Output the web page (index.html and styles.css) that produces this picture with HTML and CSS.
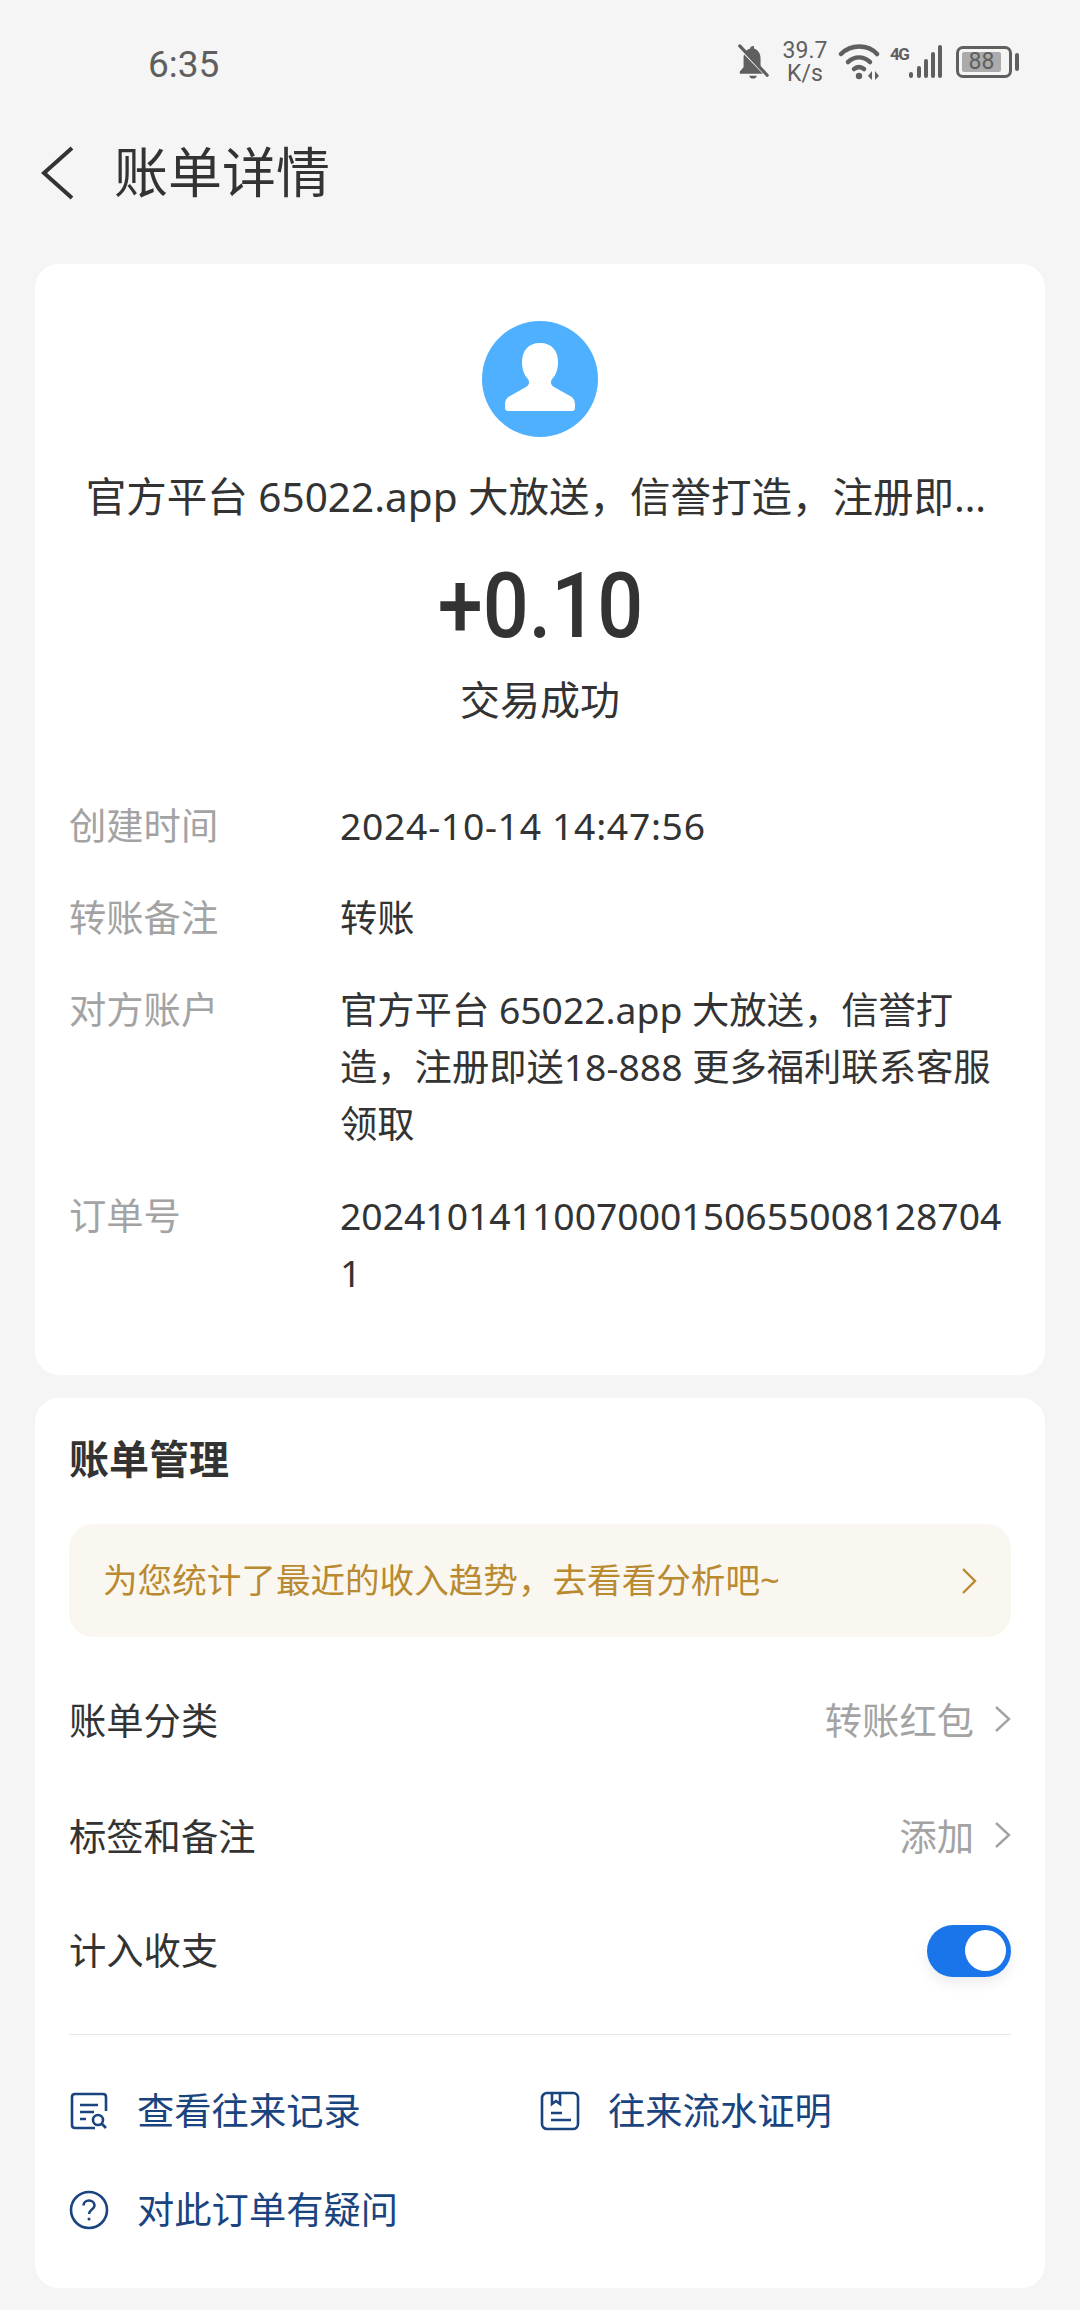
FILE: index.html
```html
<!DOCTYPE html>
<html lang="zh-CN">
<head>
    <meta charset="UTF-8">
    <meta name="viewport" content="width=device-width, initial-scale=1.0">
    <title>账单详情</title>
    <link rel="stylesheet" href="styles.css">
</head>
<body>
    <div class="status-bar">
        <span class="status-time">6:35</span>
        <div class="status-icons">
            <svg class="icon-bell" width="34" height="38" viewBox="0 0 36 40">
                <path d="M18 3c-1.700 0-3 1.200-3 2.800C10.800 7 8 11 8 16v9.500L4 30v2.500h27v-1L10 9l16 17v-10c0-5-3-9-7-10.200C19 4.200 19.500 3 18 3z" fill="#5f5f5f"/>
                <path d="M14 34.500h8c-.5 2-2 3-4 3s-3.500-1-4-3z" fill="#5f5f5f"/>
                <path d="M2.500 3.500L34 36" stroke="#f5f5f5" stroke-width="3"/>
                <path d="M4 3l29 31" stroke="#5f5f5f" stroke-width="3.400" stroke-linecap="round"/>
            </svg>
            <div class="net-speed"><span>39.7</span><span>K/s</span></div>
            <svg class="icon-wifi" width="44" height="38" viewBox="0 0 44 38">
                <path d="M3 11C13 1 30 1 39 11" fill="none" stroke="#5f5f5f" stroke-width="4.500" stroke-linecap="round"/>
                <path d="M10 19c7-6 15-6 22 0" fill="none" stroke="#5f5f5f" stroke-width="4.500" stroke-linecap="round"/>
                <path d="M16 26c3.500-2.500 7-2.500 10 0" fill="none" stroke="#5f5f5f" stroke-width="4.500" stroke-linecap="round"/>
                <circle cx="21" cy="33" r="3.200" fill="#5f5f5f"/>
                <path d="M30 33l4-5v9zM37 28l4 5-4 4z" fill="#5f5f5f"/>
            </svg>
            <div class="signal">
                <span class="label-4g">4G</span>
                <svg width="36" height="36" viewBox="0 0 36 36">
                    <rect x="1" y="28" width="4" height="6" rx="2" fill="#5f5f5f"/>
                    <rect x="9" y="22" width="4" height="12" rx="2" fill="#5f5f5f"/>
                    <rect x="16" y="15" width="4" height="19" rx="2" fill="#5f5f5f"/>
                    <rect x="23" y="8" width="4" height="26" rx="2" fill="#5f5f5f"/>
                    <rect x="30" y="1" width="4" height="33" rx="2" fill="#5f5f5f"/>
                </svg>
            </div>
            <div class="battery">
                <div class="battery-body"><span class="battery-level">88</span></div>
                <div class="battery-cap"></div>
            </div>
        </div>
    </div>

    <div class="title-bar">
        <svg class="back" width="36" height="54" viewBox="0 0 36 54">
            <path d="M32 2L4 27l28 25" fill="none" stroke="#333" stroke-width="4"/>
        </svg>
        <h1>账单详情</h1>
    </div>

    <section class="card card-main">
        <div class="summary">
            <svg class="avatar" width="116" height="116" viewBox="0 0 116 116">
                <circle cx="58" cy="58" r="58" fill="#4fb0ff"/>
                <path d="M58 22c-12 0-18 8-18 19 0 7 2 13 6 17 2 3 1 6-2 8L28 75c-4 2-5 5-5 9v3c0 2 1 3 3 3h64c2 0 3-1 3-3v-3c0-4-1-7-5-9l-16-9c-3-2-4-5-2-8 4-4 6-10 6-17 0-11-6-19-18-19z" fill="#fff"/>
            </svg>
            <div class="payer">官方平台 65022.app 大放送，信誉打造，注册即…</div>
            <div class="amount">+0.10</div>
            <div class="state">交易成功</div>
        </div>
        <dl class="details">
            <div class="detail-row"><dt>创建时间</dt><dd class="date">2024-10-14 14:47:56</dd></div>
            <div class="detail-row"><dt>转账备注</dt><dd>转账</dd></div>
            <div class="detail-row"><dt>对方账户</dt><dd>官方平台 65022.app 大放送，信誉打造，注册即送18-888 更多福利联系客服领取</dd></div>
            <div class="detail-row"><dt>订单号</dt><dd class="order-no">20241014110070001506550081287041</dd></div>
        </dl>
    </section>

    <section class="card card-manage">
        <h2>账单管理</h2>
        <div class="tip">
            <span class="tip-text">为您统计了最近的收入趋势，去看看分析吧~</span>
            <svg width="16" height="26" viewBox="0 0 16 26"><path d="M2 1l12 12L2 25" fill="none" stroke="#b98a2f" stroke-width="2.400"/></svg>
        </div>
        <div class="manage-row row-first">
            <span>账单分类</span>
            <div class="row-value">转账红包<svg width="16" height="26" viewBox="0 0 16 26"><path d="M1 1l13 12L1 25" fill="none" stroke="#a3a3a3" stroke-width="2.400"/></svg></div>
        </div>
        <div class="manage-row">
            <span>标签和备注</span>
            <div class="row-value">添加<svg width="16" height="26" viewBox="0 0 16 26"><path d="M1 1l13 12L1 25" fill="none" stroke="#a3a3a3" stroke-width="2.400"/></svg></div>
        </div>
        <div class="manage-row">
            <span class="switch-label">计入收支</span>
            <div class="switch"><div class="switch-knob"></div></div>
        </div>
        <div class="links">
            <a class="link">
                <svg width="40" height="40" viewBox="0 0 40 40" fill="none" stroke="#1a4480" stroke-width="2.600">
                    <path d="M37 20V6c0-2-1-3-3-3H6C4 3 3 4 3 6v28c0 2 1 3 3 3h20"/>
                    <path d="M11 14h18M11 21h14M11 28h6"/>
                    <circle cx="29" cy="29" r="5"/>
                    <path d="M33 33l4 4"/>
                </svg>
                查看往来记录
            </a>
            <a class="link">
                <svg width="40" height="40" viewBox="0 0 40 40" fill="none" stroke="#1a4480" stroke-width="2.600">
                    <rect x="2" y="2" width="36" height="36" rx="5"/>
                    <path d="M12 2v11l4-3 4 3V2M11 22h11M11 29h20"/>
                </svg>
                往来流水证明
            </a>
            <a class="link">
                <svg width="40" height="40" viewBox="0 0 40 40" fill="none" stroke="#1a4480" stroke-width="2.600">
                    <circle cx="20" cy="20" r="18"/>
                    <path d="M14.500 15.500c0-3 2.500-5 5.500-5s5.500 2 5.500 5c0 4-5.500 4-5.500 8.500"/>
                    <circle cx="20" cy="29" r="1.500" fill="#1a4480" stroke="none"/>
                </svg>
                对此订单有疑问
            </a>
        </div>
    </section>
</body>
</html>
```

FILE: styles.css
```css
* {
    box-sizing: border-box;
}

body {
    margin: 0;
    width: 1080px;
    height: 2310px;
    overflow: hidden;
    background-color: #f5f5f5;
    color: #333;
    font-family: "Noto Sans", "Noto Sans CJK SC", sans-serif;
}

.status-bar {
    height: 88px;
    padding: 36px 61px 0 148px;
    display: flex;
    justify-content: space-between;
    align-items: flex-start;
    color: #5f5f5f;
}

.status-time {
    font-family: Roboto, sans-serif;
    font-size: 37px;
    line-height: 54px;
    margin-top: 2px;
}

.status-icons {
    display: flex;
    align-items: center;
    height: 50px;
    margin-top: 1px;
}

.icon-bell {
    margin-right: 12px;
}

.net-speed {
    display: flex;
    flex-direction: column;
    align-items: center;
    width: 46px;
    margin-right: 10px;
    font-family: Roboto, sans-serif;
    font-size: 23px;
    line-height: 23px;
}

.signal {
    display: flex;
    align-items: flex-start;
    margin-left: 8px;
}

.label-4g {
    width: 18px;
    font-family: Roboto, sans-serif;
    font-size: 17px;
    font-weight: 700;
    letter-spacing: -1.5px;
    line-height: 20px;
}

.battery {
    display: flex;
    align-items: center;
    margin-left: 12px;
}

.battery-body {
    width: 56px;
    height: 32px;
    padding: 3px;
    border: 3px solid #5f5f5f;
    border-radius: 7px;
}

.battery-level {
    display: block;
    width: 39px;
    height: 20px;
    border-radius: 2px;
    background-color: #ababab;
    font-family: Roboto, sans-serif;
    font-size: 23px;
    line-height: 20px;
    text-align: center;
}

.battery-cap {
    width: 4px;
    height: 18px;
    margin-left: 3px;
    border-radius: 2px;
    background-color: #5f5f5f;
}

.title-bar {
    height: 176px;
    padding: 0 0 4px 40px;
    display: flex;
    align-items: flex-start;
}

.back {
    margin-top: 58px;
}

h1 {
    margin: 45px 0 0 38px;
    font-size: 54px;
    font-weight: 400;
    line-height: 78px;
}

.card {
    margin: 0 35px;
    padding: 0 34px;
    background-color: #fff;
    border-radius: 24px;
}

.card-main {
    height: 1111px;
    padding-top: 57px;
}

.summary {
    display: flex;
    flex-direction: column;
    align-items: center;
}

.avatar {
    display: block;
}

.payer {
    margin: 32px 8px 0 0;
    font-size: 40.5px;
    line-height: 56px;
    white-space: nowrap;
}

.amount {
    margin-top: 26px;
    font-family: Roboto, sans-serif;
    font-size: 91px;
    font-weight: 500;
    line-height: 110px;
    transform: scaleX(0.89);
}

.state {
    margin-top: 10px;
    font-size: 40px;
    line-height: 58px;
}

.details {
    margin: 68px 0 0;
    font-size: 37.3px;
    line-height: 57px;
}

.detail-row {
    display: flex;
    margin-bottom: 35px;
}

dt {
    width: 271px;
    flex-shrink: 0;
    color: #a3a3a3;
}

dd {
    margin: 0;
    flex: 1;
    min-width: 0;
}

.date {
    letter-spacing: 0.7px;
}

.order-no {
    word-break: break-all;
}

.card-manage {
    height: 890px;
    margin-top: 23px;
    padding-top: 32px;
}

h2 {
    margin: 0;
    font-size: 40px;
    font-weight: 700;
    line-height: 58px;
}

.tip {
    height: 113px;
    margin-top: 36px;
    padding: 0 34px;
    display: flex;
    align-items: center;
    justify-content: space-between;
    background-color: #faf7f1;
    border-radius: 24px;
    color: #b98a2f;
    font-size: 34.6px;
}

.tip-text {
    margin-bottom: 5px;
}

.manage-row {
    height: 116px;
    display: flex;
    align-items: center;
    justify-content: space-between;
    font-size: 37.3px;
}

.row-first {
    margin-top: 24px;
}

.row-value {
    display: flex;
    align-items: center;
    gap: 21px;
    color: #a3a3a3;
}

.switch-label {
    margin-bottom: 5px;
}

.switch {
    width: 84px;
    height: 52px;
    padding: 5px;
    border-radius: 26px;
    background-color: #1a75eb;
    display: flex;
    justify-content: flex-end;
    box-shadow: 0 6px 14px rgba(0, 0, 0, 0.08);
}

.switch-knob {
    width: 41px;
    height: 41px;
    background-color: #fff;
    border-radius: 50%;
}

.links {
    margin-top: 25px;
    padding-top: 49px;
    border-top: 1px solid #e6e6e6;
    display: grid;
    grid-template-columns: 471px 1fr;
    row-gap: 45px;
}

.link {
    display: flex;
    align-items: center;
    gap: 28px;
    color: #1a4480;
    font-size: 37.3px;
    line-height: 54px;
}
```
